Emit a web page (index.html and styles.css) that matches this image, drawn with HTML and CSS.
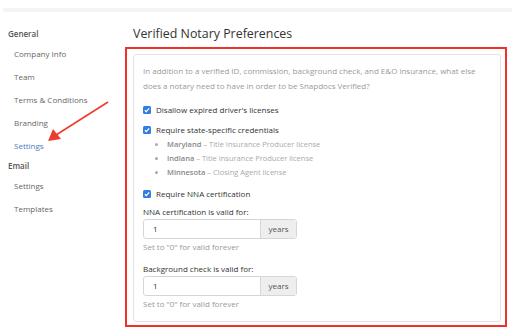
FILE: index.html
```html
<!DOCTYPE html>
<html lang="en">
  <head>
    <meta charset="UTF-8" />
    <title>Verified Notary Preferences</title>
    <link rel="stylesheet" href="styles.css">
  </head>
  <body>
    <div class="topbar"></div>

    <div class="layout">
      <nav class="sidebar">
        <div class="nav-group">
          <div class="nav-heading">General</div>
          <a class="nav-item">Company Info</a>
          <a class="nav-item">Team</a>
          <a class="nav-item">Terms &amp; Conditions</a>
          <a class="nav-item">Branding</a>
          <a class="nav-item active">Settings</a>
        </div>
        <div class="nav-group">
          <div class="nav-heading">Email</div>
          <a class="nav-item">Settings</a>
          <a class="nav-item">Templates</a>
        </div>
      </nav>

      <main class="content">
        <h1 class="page-title">Verified Notary Preferences</h1>

        <div class="highlight">
          <div class="card">
            <p class="intro">
              In addition to a verified ID, commission, background check, and E&amp;O insurance, what else
              does a notary need to have in order to be Snapdocs Verified?
            </p>

            <label class="check-row first">
              <span class="check"><svg viewBox="0 0 8 8"><path d="M1.8 4.2 L3.3 5.6 L6.2 2.4" /></svg></span>
              Disallow expired driver's licenses
            </label>

            <label class="check-row">
              <span class="check"><svg viewBox="0 0 8 8"><path d="M1.8 4.2 L3.3 5.6 L6.2 2.4" /></svg></span>
              Require state-specific credentials
            </label>
            <ul class="states">
              <li><b>Maryland</b> – Title Insurance Producer license</li>
              <li><b>Indiana</b> – Title Insurance Producer license</li>
              <li><b>Minnesota</b> – Closing Agent license</li>
            </ul>

            <label class="check-row nna">
              <span class="check"><svg viewBox="0 0 8 8"><path d="M1.8 4.2 L3.3 5.6 L6.2 2.4" /></svg></span>
              Require NNA certification
            </label>

            <div class="field">
              <div class="field-label">NNA certification is valid for:</div>
              <div class="input-group">
                <div class="input">1</div>
                <div class="addon">years</div>
              </div>
              <div class="help">Set to "0" for valid forever</div>
            </div>

            <div class="field">
              <div class="field-label">Background check is valid for:</div>
              <div class="input-group">
                <div class="input">1</div>
                <div class="addon">years</div>
              </div>
              <div class="help">Set to "0" for valid forever</div>
            </div>
          </div>
        </div>
      </main>
    </div>

    <!-- annotation arrow pointing at the active nav item -->
    <svg class="arrow" width="512" height="334" viewBox="0 0 512 334">
      <line x1="108" y1="102" x2="56" y2="135" />
      <polygon points="48,141 53,129 61,139" />
    </svg>
  </body>
</html>
```

FILE: styles.css
```css
body {
  margin: 0;
  font-family: "Open Sans", "DejaVu Sans", sans-serif;
  font-size: 8px;
  color: #333;
  background: #fff;
  position: relative;
  width: 512px;
  height: 334px;
  overflow: hidden;
}
.topbar {
  height: 8px;
  border-bottom: 4px solid #f4f4f4;
  margin-left: 3px;
}
.layout {
  display: flex;
}
.sidebar {
  width: 117px;
  padding: 15px 0 0 8px;
}
.nav-group {
  display: flex;
  flex-direction: column;
  margin-bottom: 6px;
}
.nav-heading {
  line-height: 14px;
  font-weight: 600;
  color: #555;
  margin-bottom: 6px;
}
.nav-item {
  line-height: 14px;
  color: #666;
  padding-left: 6px;
  margin-bottom: 9px;
}
.nav-item:last-child {
  margin-bottom: 0;
}
.nav-item.active {
  color: #4a7cc4;
}
.content {
  flex: 1;
  padding-right: 5px;
}
.page-title {
  margin: 11px 0 2px 8px;
  font-size: 12.4px;
  font-weight: 400;
  line-height: 22px;
  color: #333;
}
.highlight {
  border: 2px solid #f0302a;
  padding: 5px 4px 3px 6px;
}
.card {
  border: 1px solid #e2e2e2;
  border-radius: 3px;
  padding: 8px 9px 10px 9px;
}
.intro {
  margin: 0;
  line-height: 15px;
  color: #999;
}
.check-row {
  display: flex;
  align-items: center;
  gap: 5px;
  line-height: 14px;
  margin-top: 6px;
  color: #333;
}
.check-row.first {
  margin-top: 10px;
}
.check-row.nna {
  margin-top: 8px;
}
.check {
  width: 8px;
  height: 8px;
  border-radius: 1.5px;
  background: #2f7ee0;
  display: flex;
}
.check svg {
  width: 8px;
  height: 8px;
  fill: none;
  stroke: #fff;
  stroke-width: 1.3;
}
.states {
  margin: 0;
  padding-left: 24px;
  font-size: 7.5px;
  line-height: 14px;
  color: #aaa;
}
.states b {
  font-weight: 600;
  color: #888;
}
.field {
  margin-top: 4px;
}
.field + .field {
  margin-top: 8px;
}
.field-label {
  line-height: 14px;
  color: #333;
}
.input-group {
  display: flex;
  width: 154px;
  height: 20px;
  box-sizing: border-box;
  border: 1px solid #d6d6d6;
  border-radius: 3px;
}
.input {
  flex: 1;
  padding-left: 9px;
  line-height: 18px;
  color: #333;
}
.addon {
  width: 35px;
  border-left: 1px solid #d6d6d6;
  background: #eee;
  text-align: center;
  line-height: 18px;
  color: #555;
}
.help {
  margin-top: 1px;
  line-height: 14px;
  color: #999;
}
.arrow {
  position: absolute;
  left: 0;
  top: 0;
  pointer-events: none;
}
.arrow line {
  stroke: #ee3b2f;
  stroke-width: 1.6;
}
.arrow polygon {
  fill: #ee3b2f;
}
```
